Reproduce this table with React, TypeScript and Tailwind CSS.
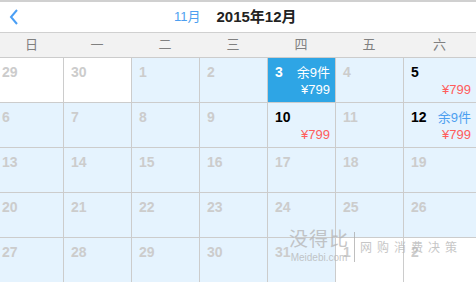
type Cell = {
  day: number;
  kind: 'out' | 'off' | 'on' | 'sel';
  left?: string;
  price?: string;
};

const rows: Cell[][] = [
  [
    { day: 29, kind: 'out' },
    { day: 30, kind: 'out' },
    { day: 1, kind: 'off' },
    { day: 2, kind: 'off' },
    { day: 3, kind: 'sel', left: '余9件', price: '¥799' },
    { day: 4, kind: 'off' },
    { day: 5, kind: 'on', price: '¥799' },
  ],
  [
    { day: 6, kind: 'off' },
    { day: 7, kind: 'off' },
    { day: 8, kind: 'off' },
    { day: 9, kind: 'off' },
    { day: 10, kind: 'on', price: '¥799' },
    { day: 11, kind: 'off' },
    { day: 12, kind: 'on', left: '余9件', price: '¥799' },
  ],
  [13, 14, 15, 16, 17, 18, 19].map((d) => ({ day: d, kind: 'off' as const })),
  [20, 21, 22, 23, 24, 25, 26].map((d) => ({ day: d, kind: 'off' as const })),
  [
    { day: 27, kind: 'off' },
    { day: 28, kind: 'off' },
    { day: 29, kind: 'off' },
    { day: 30, kind: 'off' },
    { day: 31, kind: 'off' },
    { day: 1, kind: 'out' },
    { day: 2, kind: 'out' },
  ],
];

const weekdays = ['日', '一', '二', '三', '四', '五', '六'];

const cellBg = {
  out: 'bg-white',
  off: 'bg-[#e5f3fe]',
  on: 'bg-[#e5f3fe]',
  sel: 'bg-[#2ea5e5]',
};

const numColor = {
  out: 'text-[#cccccc]',
  off: 'text-[#cccccc]',
  on: 'text-black',
  sel: 'text-white',
};

function DayCell({ cell, col }: { cell: Cell; col: number }) {
  const sel = cell.kind === 'sel';
  return (
    <div
      className={`h-[45px] border-b border-[#cccccc] ${col > 0 ? 'border-l' : ''} ${cellBg[cell.kind]} ${
        col === 0 ? 'pl-[2px]' : 'pl-[7px]'
      } pr-[5px] pt-[6px] flex flex-col`}
    >
      <div className="flex items-center justify-between h-[16px]">
        <span className={`text-[14px] font-bold leading-none ${numColor[cell.kind]}`}>{cell.day}</span>
        {cell.left && (
          <span className={`text-[13px] leading-none ${sel ? 'text-white' : 'text-[#4d9ff0]'}`}>{cell.left}</span>
        )}
      </div>
      {cell.price && (
        <div className={`text-right text-[13px] leading-none mt-[3px] ${sel ? 'text-white' : 'text-[#ff5c5c]'}`}>
          {cell.price}
        </div>
      )}
    </div>
  );
}

export default function App() {
  return (
    <div
      className="relative w-[476px] h-[282px] overflow-hidden bg-white"
      style={{ fontFamily: '"Liberation Sans", "Noto Sans CJK SC", sans-serif' }}
    >
      {/* Month header */}
      <div className="h-[33px] border-t-2 border-b border-[#d0d0d0] flex items-center">
        <svg width="24" height="24" viewBox="0 0 24 24" className="ml-[3px]">
          <path d="M14 5 L8 12 L14 19" fill="none" stroke="#4a9ff5" strokeWidth="2" />
        </svg>
        <span className="ml-[147px] text-[13px] text-[#4d9ff0]">11月</span>
        <span className="ml-[16px] text-[15px] font-bold text-[#222222]">2015年12月</span>
      </div>

      {/* Weekday labels */}
      <div className="grid grid-cols-[63px_repeat(5,68px)_1fr] h-[25px] bg-[#f2f2f2] border-b border-[#cccccc]">
        {weekdays.map((w) => (
          <div key={w} className="flex items-center justify-center text-[13px] text-[#808080]">
            {w}
          </div>
        ))}
      </div>

      {/* Days grid */}
      <div className="grid grid-cols-[63px_repeat(5,68px)_1fr]">
        {rows.map((row, r) =>
          row.map((cell, c) => <DayCell key={`${r}-${c}`} cell={cell} col={c} />)
        )}
      </div>

      {/* Watermark */}
      <div className="absolute left-[289px] top-[230px] flex items-center gap-[5px] pointer-events-none opacity-75">
        <div className="flex flex-col items-center w-[60px]">
          <span className="text-[19px] leading-[20px] tracking-[1px] text-[#b4b4b4]">没得比</span>
          <span className="text-[10px] leading-none text-[#b4b4b4] mt-[3px]">Meidebi.com</span>
        </div>
        <div className="w-px h-[30px] bg-[#aaaaaa]" />
        <span className="text-[12px] leading-none tracking-[5px] text-[#b4b4b4] mt-[2px]">网购消费决策</span>
      </div>
    </div>
  );
}
